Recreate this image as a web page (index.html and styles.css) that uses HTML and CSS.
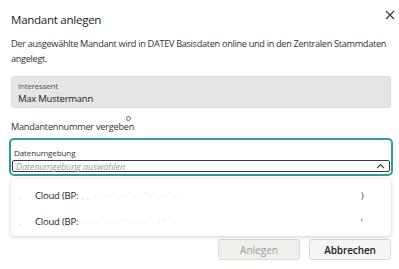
FILE: index.html
```html
<!DOCTYPE html>
<html lang="de">
<head>
<meta charset="utf-8">
<title>Mandant anlegen</title>
<link rel="stylesheet" href="styles.css">
</head>
<body>
<div class="dialog">
  <header class="head">
    <h1 class="title">Mandant anlegen</h1>
    <button class="close" aria-label="Schließen">
      <svg width="10" height="10" viewBox="0 0 10 10"><path d="M1 1L9 9M9 1L1 9" stroke="#333" stroke-width="1.1" fill="none"/></svg>
    </button>
  </header>
  <p class="desc"><span class="nowrap">Der ausgewählte Mandant wird in DATEV Basisdaten online und in den Zentralen Stammdaten</span> angelegt.</p>
  <div class="readonly">
    <span class="ro-label">Interessent</span>
    <span class="ro-value">Max Mustermann</span>
  </div>
  <div class="check">Mandantennummer vergeben<span class="ring"></span></div>
  <div class="field-wrap">
    <div class="field">
      <span class="field-label">Datenumgebung</span>
      <div class="input">
        <span class="placeholder">Datenumgebung auswählen</span>
        <svg class="chev" width="9" height="6" viewBox="0 0 9 6"><path d="M1 5L4.5 1.5L8 5" stroke="#444" stroke-width="1.1" fill="none"/></svg>
      </div>
    </div>
    <div class="menu">
      <div class="item"><span class="speck">.</span><span class="txt">Cloud (BP:</span><span class="blur">, .. ·· ˙˙ · · ˙ ·  · · ˙ · ·  ˙˙ · ˙  · ·· ˙ ·  ˙ ·</span><span class="end">)</span></div>
      <div class="item"><span class="speck">.</span><span class="txt">Cloud (BP:</span><span class="blur"> ·  · ·· ˙ ·   · · ˙˙  · ·  · ·· ˙   ·· ˙˙  ˙ ·</span><span class="end">ʼ</span></div>
    </div>
  </div>
  <footer class="foot">
    <button class="btn btn-disabled" disabled>Anlegen</button>
    <button class="btn btn-secondary">Abbrechen</button>
  </footer>
</div>
</body>
</html>
```
FILE: styles.css
```css
html, body {
  margin: 0;
  padding: 0;
  background: #fff;
}
body {
  font-family: "Open Sans", "Noto Sans", sans-serif;
  color: #222;
  width: 399px;
  height: 269px;
  overflow: hidden;
}
.dialog {
  padding: 9px 8px 0 11px;
  display: flex;
  flex-direction: column;
}
.head {
  display: flex;
  justify-content: space-between;
  align-items: center;
  height: 20px;
}
.title {
  margin: 0;
  font-size: 11.6px;
  font-weight: 400;
  letter-spacing: -0.3px;
  color: #222;
}
.close {
  border: 0;
  background: none;
  padding: 0;
  margin: -8px -5px 0 0;
  width: 12px;
  height: 12px;
  display: flex;
  align-items: center;
  justify-content: center;
}
.desc {
  margin: 8px -6px 0 0;
  font-size: 9.2px;
  line-height: 14.5px;
  color: #333;
  letter-spacing: -0.32px;
}
.nowrap {
  white-space: nowrap;
}
.readonly {
  margin-top: 10px;
  height: 32px;
  box-sizing: border-box;
  background: #e5e5e5;
  border: 1px solid #dddddd;
  border-radius: 3px;
  padding: 3px 6px 0 6px;
  display: flex;
  flex-direction: column;
}
.ro-label {
  font-size: 8px;
  line-height: 11px;
  color: #555;
  letter-spacing: -0.2px;
}
.ro-value {
  font-size: 9.5px;
  line-height: 15px;
  color: #222;
  font-weight: 500;
  letter-spacing: -0.25px;
}
.check {
  margin-top: 12px;
  font-size: 9.2px;
  line-height: 14px;
  color: #333;
  position: relative;
  align-self: flex-start;
  letter-spacing: -0.25px;
}
.ring {
  position: absolute;
  right: 3px;
  top: -4px;
  width: 3px;
  height: 3px;
  border: 1px solid #666;
  border-radius: 50%;
}
.field-wrap {
  position: relative;
  margin-top: 4px;
  margin-left: -2px;
}
.field {
  width: 384px;
  height: 38px;
  box-sizing: border-box;
  border: 2px solid #2e9ea0;
  border-radius: 5px;
  padding: 7px 1px 0 1px;
  display: flex;
  flex-direction: column;
}
.field-label {
  font-size: 8px;
  line-height: 11px;
  color: #333;
  padding-left: 2px;
  letter-spacing: -0.1px;
}
.input {
  margin-top: 2px;
  height: 12px;
  box-sizing: border-box;
  border: 1px solid #3a3a3a;
  border-radius: 2px;
  display: flex;
  align-items: center;
  justify-content: space-between;
  padding: 0 4px 0 3px;
}
.placeholder {
  font-size: 9px;
  font-style: italic;
  color: #9a9a9a;
  letter-spacing: -0.1px;
}
.menu {
  position: absolute;
  left: 2px;
  top: 41px;
  width: 380px;
  height: 57px;
  background: #fff;
  border-radius: 4px;
  box-shadow: 0 1px 4px rgba(0,0,0,0.18), 0 0 1px rgba(0,0,0,0.12);
  display: flex;
  flex-direction: column;
  padding-top: 3px;
  box-sizing: border-box;
}
.item {
  height: 26px;
  display: flex;
  align-items: center;
  font-size: 9.5px;
  color: #222;
  position: relative;
}
.speck {
  width: 24px;
  padding-left: 8px;
  box-sizing: border-box;
  color: #bbb;
  font-size: 8px;
}
.txt {
  font-weight: 500;
  letter-spacing: -0.2px;
}
.blur {
  color: #c8c8c8;
  font-size: 8px;
  white-space: pre;
  flex: 1;
  padding-left: 4px;
}
.end {
  width: 30px;
  color: #444;
  font-size: 9px;
}
.foot {
  margin-top: 63px;
  display: flex;
  justify-content: flex-end;
  gap: 9px;
}
.btn {
  height: 21px;
  box-sizing: border-box;
  font-family: "Open Sans", "Noto Sans", sans-serif;
  font-size: 10px;
  border-radius: 3px;
  padding: 0;
}
.btn-disabled {
  width: 82px;
  background: #f0efec;
  border: 1px solid #dcdad5;
  color: #999;
}
.btn-secondary {
  width: 82px;
  background: #f4f5f7;
  border: 1px solid #d3d6db;
  color: #222;
  font-weight: 600;
  letter-spacing: -0.1px;
}
```
